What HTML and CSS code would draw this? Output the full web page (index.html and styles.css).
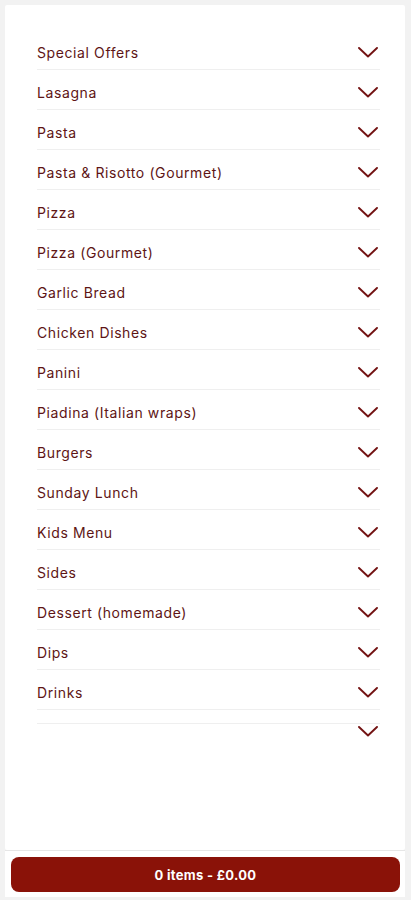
FILE: index.html
```html
<!DOCTYPE html>
<html lang="en">
<head>
<meta charset="utf-8">
<title>Menu</title>
<link rel="stylesheet" href="styles.css">
</head>
<body>
<div class="page">
  <div class="card">
    <ul class="cats">
      <li class="row"><span class="name">Special Offers</span><svg class="chev" viewBox="0 0 20 11"><polyline points="1,1 10,9.5 19,1"/></svg></li>
      <li class="row"><span class="name">Lasagna</span><svg class="chev" viewBox="0 0 20 11"><polyline points="1,1 10,9.5 19,1"/></svg></li>
      <li class="row"><span class="name">Pasta</span><svg class="chev" viewBox="0 0 20 11"><polyline points="1,1 10,9.5 19,1"/></svg></li>
      <li class="row"><span class="name">Pasta &amp; Risotto (Gourmet)</span><svg class="chev" viewBox="0 0 20 11"><polyline points="1,1 10,9.5 19,1"/></svg></li>
      <li class="row"><span class="name">Pizza</span><svg class="chev" viewBox="0 0 20 11"><polyline points="1,1 10,9.5 19,1"/></svg></li>
      <li class="row"><span class="name">Pizza (Gourmet)</span><svg class="chev" viewBox="0 0 20 11"><polyline points="1,1 10,9.5 19,1"/></svg></li>
      <li class="row"><span class="name">Garlic Bread</span><svg class="chev" viewBox="0 0 20 11"><polyline points="1,1 10,9.5 19,1"/></svg></li>
      <li class="row"><span class="name">Chicken Dishes</span><svg class="chev" viewBox="0 0 20 11"><polyline points="1,1 10,9.5 19,1"/></svg></li>
      <li class="row"><span class="name">Panini</span><svg class="chev" viewBox="0 0 20 11"><polyline points="1,1 10,9.5 19,1"/></svg></li>
      <li class="row"><span class="name">Piadina (Italian wraps)</span><svg class="chev" viewBox="0 0 20 11"><polyline points="1,1 10,9.5 19,1"/></svg></li>
      <li class="row"><span class="name">Burgers</span><svg class="chev" viewBox="0 0 20 11"><polyline points="1,1 10,9.5 19,1"/></svg></li>
      <li class="row"><span class="name">Sunday Lunch</span><svg class="chev" viewBox="0 0 20 11"><polyline points="1,1 10,9.5 19,1"/></svg></li>
      <li class="row"><span class="name">Kids Menu</span><svg class="chev" viewBox="0 0 20 11"><polyline points="1,1 10,9.5 19,1"/></svg></li>
      <li class="row"><span class="name">Sides</span><svg class="chev" viewBox="0 0 20 11"><polyline points="1,1 10,9.5 19,1"/></svg></li>
      <li class="row"><span class="name">Dessert (homemade)</span><svg class="chev" viewBox="0 0 20 11"><polyline points="1,1 10,9.5 19,1"/></svg></li>
      <li class="row"><span class="name">Dips</span><svg class="chev" viewBox="0 0 20 11"><polyline points="1,1 10,9.5 19,1"/></svg></li>
      <li class="row"><span class="name">Drinks</span><svg class="chev" viewBox="0 0 20 11"><polyline points="1,1 10,9.5 19,1"/></svg></li>
      <li class="row empty"><span class="name"></span><svg class="chev" viewBox="0 0 20 11"><polyline points="1,1 10,9.5 19,1"/></svg></li>
    </ul>
  </div>
  <div class="footer">
    <button class="basket" type="button">0 items - £0.00</button>
  </div>
</div>
</body>
</html>
```

FILE: styles.css
```css
html, body {
  margin: 0;
  padding: 0;
  height: 100%;
}
body {
  background: #f2f2f2;
  font-family: "Inter", "Noto Sans", sans-serif;
}
.page {
  height: 100vh;
  display: flex;
  flex-direction: column;
  padding: 5px 6px 0 5px;
  box-sizing: border-box;
}
.card {
  flex: 1;
  background: #ffffff;
  padding: 25px 25px 0 32px;
  border-radius: 2px;
}
.cats {
  list-style: none;
  margin: 0;
  padding: 0;
}
.row {
  display: flex;
  align-items: center;
  justify-content: space-between;
  height: 40px;
  box-sizing: border-box;
  padding: 5px 2px 0 0;
  border-bottom: 1px solid #efefef;
}
.name {
  font-size: 14px;
  font-weight: 400;
  color: #5e1515;
  letter-spacing: 0.6px;
}
.chev {
  width: 20px;
  height: 11px;
  fill: none;
  stroke: #731313;
  stroke-width: 1.9;
  stroke-linecap: round;
  stroke-linejoin: round;
}
.row.empty {
  height: auto;
  margin-top: 13px;
  border-top: 1px solid #efefef;
  border-bottom: none;
  padding: 2px 2px 0 0;
}
.footer {
  background: #ffffff;
  border-top: 1px solid #e6e6e6;
  padding: 6px 5px 5px 6px;
  margin-bottom: 3px;
}
.basket {
  display: block;
  width: 100%;
  height: 35px;
  border: none;
  border-radius: 8px;
  background: #8a1208;
  color: #ffffff;
  font-family: "Inter", "Noto Sans", sans-serif;
  font-size: 13px;
  font-weight: 700;
  letter-spacing: 0.3px;
  cursor: pointer;
}
```
